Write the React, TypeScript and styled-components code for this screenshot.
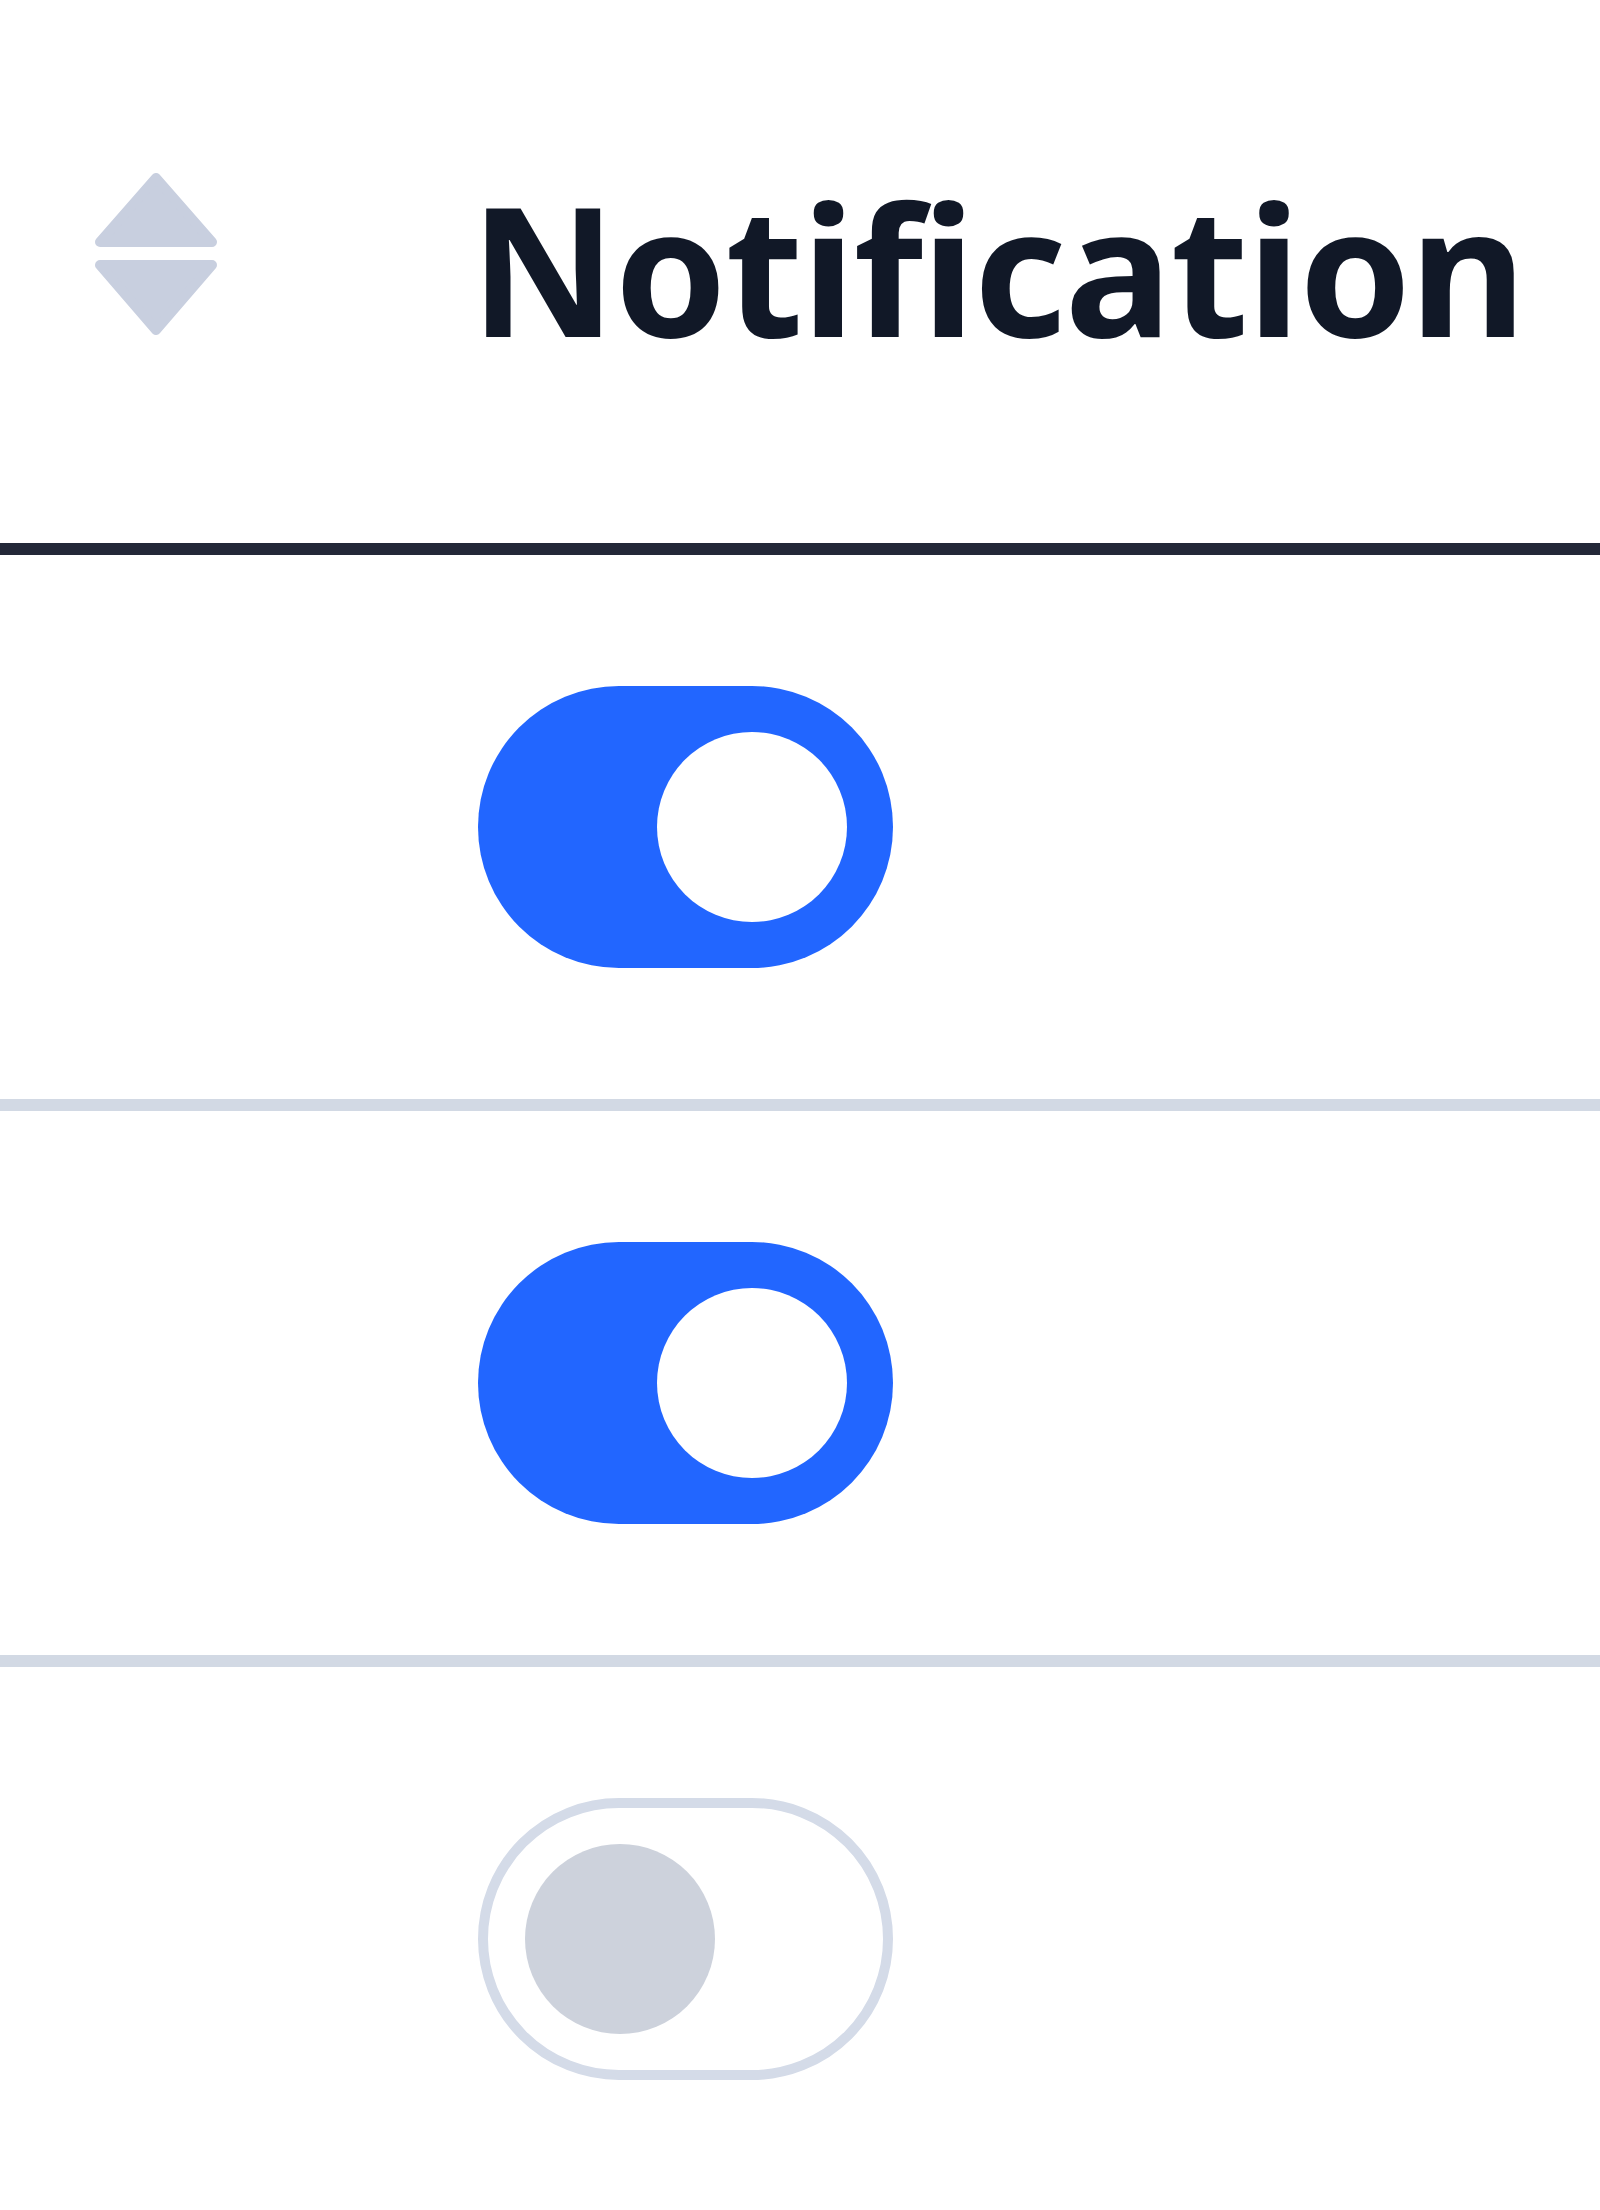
import styled, { createGlobalStyle } from 'styled-components';

const GlobalStyle = createGlobalStyle`
  html, body {
    margin: 0;
    padding: 0;
    background: #fff;
  }
  body {
    font-family: "Noto Sans", "Open Sans", sans-serif;
    overflow: hidden;
  }
`;

interface Setting {
  id: number,
  enabled: boolean,
}

const settings: Setting[] = [
  { id: 1, enabled: true },
  { id: 2, enabled: true },
  { id: 3, enabled: false },
];

const Table = styled.div`
  width: 1600px;
  height: 2210px;
  display: flex;
  flex-direction: column;
`;

const HeaderRow = styled.div`
  display: grid;
  grid-template-columns: 478px 1fr;
  align-items: center;
  height: 543px;
  border-bottom: 12px solid #232838;
  flex-shrink: 0;
`;

const SortCell = styled.div`
  padding: 0 0 36px 95px;
  display: flex;
  align-items: center;
`;

const HeaderLabel = styled.div`
  font-size: 180px;
  font-weight: 700;
  color: #111827;
  line-height: 1;
  letter-spacing: -1.8px;
  margin: 0 0 8px -8px;
`;

const Row = styled.div`
  display: grid;
  grid-template-columns: 478px 1fr;
  align-items: center;
  height: 544px;
  border-bottom: 12px solid #d2d9e4;
  flex-shrink: 0;
`;

const Cell = styled.div`
  display: flex;
  align-items: center;
`;

const Track = styled.button<{ $on: boolean }>`
  box-sizing: border-box;
  width: 415px;
  height: 282px;
  border-radius: 141px;
  padding: 0 ${p => (p.$on ? '46px' : '37px')};
  border: ${p => (p.$on ? '0' : '10px solid #d4dbe8')};
  background: ${p => (p.$on ? '#2266ff' : '#fff')};
  display: flex;
  align-items: center;
  justify-content: ${p => (p.$on ? 'flex-end' : 'flex-start')};
  cursor: pointer;
`;

const Knob = styled.span<{ $on: boolean }>`
  width: 190px;
  height: 190px;
  border-radius: 50%;
  background: ${p => (p.$on ? '#fff' : '#cdd2dc')};
`;

const SortIcon = () => (
  <svg width="122" height="162" viewBox="0 0 122 162" aria-hidden="true">
    <g fill="#c8cfdf" stroke="#c8cfdf" strokeWidth="10" strokeLinejoin="round">
      <path d="M61 5 L117 69 L5 69 Z" />
      <path d="M5 92 L117 92 L61 157 Z" />
    </g>
  </svg>
);

const App = () => {
  return (
    <>
      <GlobalStyle />
      <Table>
        <HeaderRow>
          <SortCell>
            <SortIcon />
          </SortCell>
          <HeaderLabel>Notification</HeaderLabel>
        </HeaderRow>
        {settings.map(s => (
          <Row key={s.id}>
            <Cell />
            <Cell>
              <Track type="button" role="switch" aria-checked={s.enabled} $on={s.enabled}>
                <Knob $on={s.enabled} />
              </Track>
            </Cell>
          </Row>
        ))}
      </Table>
    </>
  );
};

export default App;
